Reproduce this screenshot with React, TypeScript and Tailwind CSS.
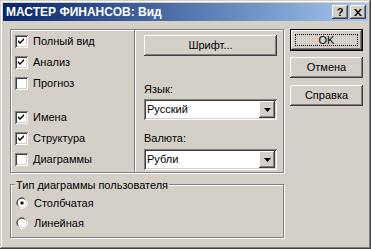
import React from 'react';

const raised =
  'bg-[#d4d0c8] shadow-[inset_-1px_-1px_0_#404040,inset_1px_1px_0_#ffffff,inset_-2px_-2px_0_#808080,inset_2px_2px_0_#d4d0c8]';
const sunken =
  'shadow-[inset_1px_1px_0_#808080,inset_-1px_-1px_0_#ffffff,inset_2px_2px_0_#404040,inset_-2px_-2px_0_#d4d0c8]';

function Check({ checked, label }: { checked: boolean; label: string }) {
  return (
    <div className="flex items-center h-[21px]">
      <div className={`w-[13px] h-[13px] bg-white ${sunken} flex items-center justify-center`}>
        {checked && (
          <svg width="7" height="7" viewBox="0 0 7 7">
            <path d="M0 2 L2 4 L6 0 L6 2 L2 6 L0 4 Z" fill="#000" />
          </svg>
        )}
      </div>
      <span className="ml-[5px]">{label}</span>
    </div>
  );
}

function Radio({ checked, label }: { checked: boolean; label: string }) {
  return (
    <div className="flex items-center h-[20px]">
      <svg width="12" height="12" viewBox="0 0 12 12">
        <path d="M8 1 A5.5 5.5 0 0 0 1 8" stroke="#808080" strokeWidth="1" fill="none" />
        <path d="M9 2.5 A4.5 4.5 0 0 0 2.5 9" stroke="#404040" strokeWidth="1" fill="none" />
        <circle cx="6" cy="6" r="4" fill="#fff" />
        <path d="M11 4 A5.5 5.5 0 0 1 4 11" stroke="#ffffff" strokeWidth="1" fill="none" />
        {checked && <rect x="4.5" y="4.5" width="3" height="3" rx="1" fill="#000" />}
      </svg>
      <span className="ml-[6px]">{label}</span>
    </div>
  );
}

function Combo({ value }: { value: string }) {
  return (
    <div className={`w-[133px] h-[21px] bg-white ${sunken} flex items-center p-[2px]`}>
      <span className="flex-1 pl-[1px]">{value}</span>
      <div className={`w-[16px] h-[17px] ${raised} flex items-center justify-center`}>
        <svg width="7" height="4" viewBox="0 0 7 4">
          <path d="M0 0 H7 L3.5 4 Z" fill="#000" />
        </svg>
      </div>
    </div>
  );
}

function Btn({ label, def }: { label: string; def?: boolean }) {
  if (def) {
    return (
      <div className="w-[73px] h-[22px] border border-black">
        <div className={`w-full h-full ${raised} flex items-center justify-center p-[4px]`}>
          <div className="w-full h-full border border-dotted border-black flex items-center justify-center">
            {label}
          </div>
        </div>
      </div>
    );
  }
  return <div className={`w-[73px] h-[21px] ${raised} flex items-center justify-center`}>{label}</div>;
}

export default function App() {
  return (
    <div
      className="w-[371px] h-[249px] bg-[#d4d0c8] text-[11px] text-black p-[3px] shadow-[inset_-1px_-1px_0_#404040,inset_1px_1px_0_#d4d0c8,inset_-2px_-2px_0_#808080,inset_2px_2px_0_#ffffff]"
      style={{ fontFamily: '"Liberation Sans", Arial, sans-serif' }}
    >
      <div className="h-[18px] bg-gradient-to-r from-[#0a246a] to-[#a6caf0] flex items-center pl-[2px] pr-[2px]">
        <span className="text-white font-bold text-[12px] flex-1 ml-[1px]">МАСТЕР ФИНАНСОВ: Вид</span>
        <div className={`w-[16px] h-[14px] ${raised} flex items-center justify-center font-bold text-[11px]`}>?</div>
        <div className={`w-[16px] h-[14px] ${raised} flex items-center justify-center ml-[2px]`}>
          <svg width="8" height="7" viewBox="0 0 8 7">
            <path d="M0 0 H2 L4 2.5 L6 0 H8 L5 3.5 L8 7 H6 L4 4.5 L2 7 H0 L3 3.5 Z" fill="#000" />
          </svg>
        </div>
      </div>

      <div className="flex pl-[7px] pt-[8px]">
        <div className="flex flex-col w-[274px]">
          <div className="flex h-[144px] border border-[#808080] shadow-[inset_1px_1px_0_#fff,1px_1px_0_#fff]">
            <div className="w-[124px] border-r border-[#808080] shadow-[1px_0_0_#fff] pl-[4px] pt-[1px]">
              <Check checked label="Полный вид" />
              <Check checked label="Анализ" />
              <Check checked={false} label="Прогноз" />
              <div className="h-[13px]" />
              <Check checked label="Имена" />
              <Check checked label="Структура" />
              <Check checked={false} label="Диаграммы" />
            </div>
            <div className="flex-1 pl-[8px] pt-[5px] ml-[1px]">
              <div className={`w-[133px] h-[21px] ${raised} flex items-center justify-center`}>Шрифт...</div>
              <div className="mt-[25px] h-[14px]">Язык:</div>
              <div className="mt-[4px]">
                <Combo value="Русский" />
              </div>
              <div className="mt-[10px] h-[14px]">Валюта:</div>
              <div className="mt-[5px]">
                <Combo value="Рубли" />
              </div>
            </div>
          </div>

          <div className="relative mt-[11px] h-[54px] border border-[#808080] shadow-[inset_1px_1px_0_#fff,1px_1px_0_#fff] pl-[5px] pt-[8px]">
            <span className="absolute left-[4px] top-[-8px] bg-[#d4d0c8] px-[1px]">Тип диаграммы пользователя</span>
            <Radio checked label="Столбчатая" />
            <Radio checked={false} label="Линейная" />
          </div>
        </div>

        <div className="flex flex-col ml-[6px] gap-[6px]">
          <Btn label="OK" def />
          <Btn label="Отмена" />
          <div className="mt-[1px]">
            <Btn label="Справка" />
          </div>
        </div>
      </div>
    </div>
  );
}
